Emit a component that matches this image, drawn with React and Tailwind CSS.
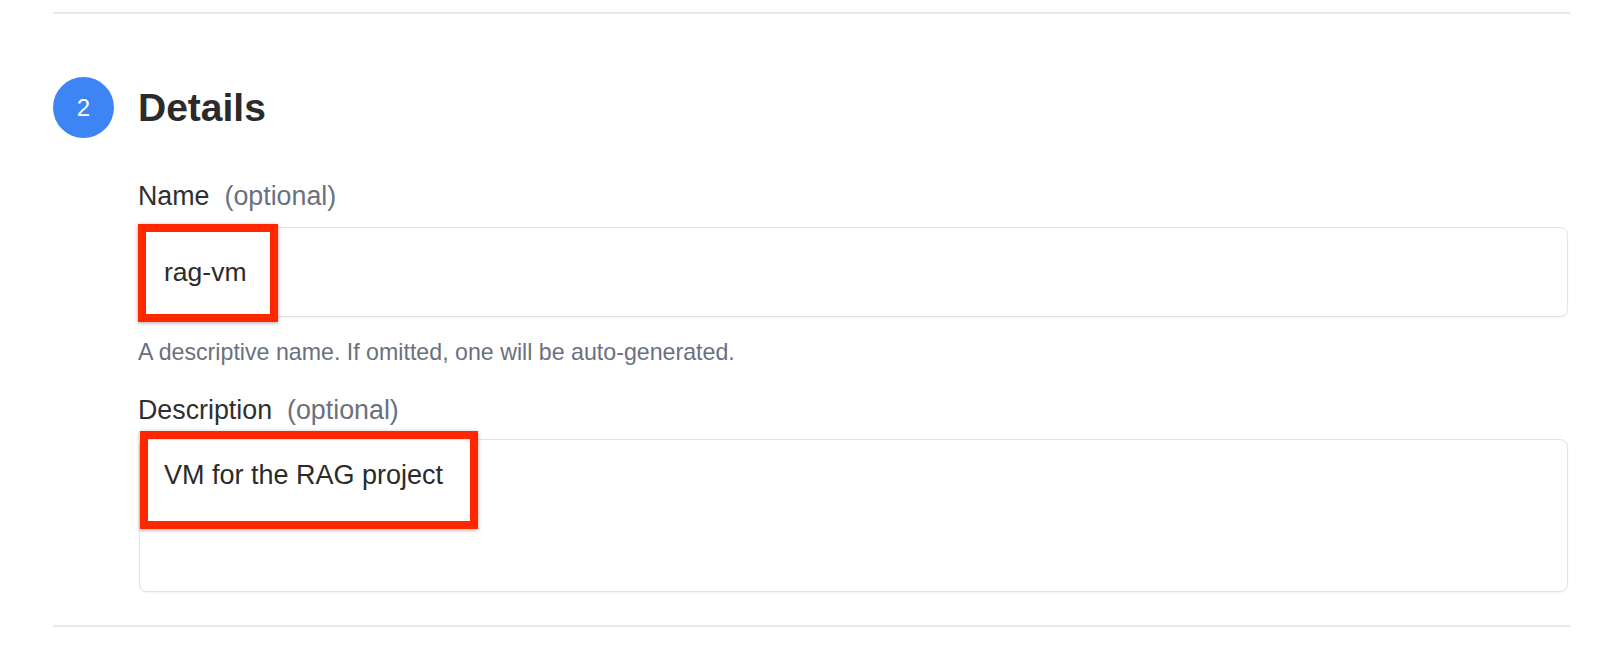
import React from "react";

function Highlight({ className }) {
  return (
    <div
      className={`pointer-events-none absolute border-[8px] border-[#ff2600] shadow-[0_1px_4px_rgba(0,0,0,0.35)] ${className}`}
    />
  );
}

function Label({ name }) {
  return (
    <div className="h-[30px] leading-[30px] text-[26.8px] text-[#2f2f2f]">
      {name}
      <span className="ml-[15px] text-[#6b7080]">(optional)</span>
    </div>
  );
}

export default function App() {
  return (
    <div className="min-h-screen bg-white pl-[53px] pr-[30px] pt-[12px] font-['Liberation_Sans',Arial,sans-serif]">
      <section className="border-t-2 border-b-2 border-[#e8e8ea] pt-[63px] pb-[33px]">
        <div className="flex items-center gap-[24px]">
          <div className="flex h-[61px] w-[61px] items-center justify-center rounded-full bg-[#3d85f5] text-[24px] text-white">
            2
          </div>
          <h2 className="text-[39px] font-bold leading-none text-[#2b2b2b]">
            Details
          </h2>
        </div>

        <div className="ml-[85px] mr-[2px]">
          <div className="mt-[43px]">
            <Label name="Name" />
          </div>
          <div className="relative mt-[16px] ml-[1px]">
            <input
              defaultValue="rag-vm"
              className="h-[90px] w-full rounded-[8px] border border-[#e2e3e8] bg-white px-[24px] text-[26.5px] text-[#2b2b2b] shadow-[0_1px_2px_rgba(0,0,0,0.05)] outline-none"
            />
            <Highlight className="left-[-1px] top-[-3px] h-[98px] w-[140px]" />
          </div>
          <p className="mt-[20px] h-[30px] leading-[30px] text-[23.2px] text-[#6b7080]">
            A descriptive name. If omitted, one will be auto-generated.
          </p>

          <div className="mt-[28px]">
            <Label name="Description" />
          </div>
          <div className="relative mt-[14px] ml-[1px]">
            <textarea
              defaultValue="VM for the RAG project"
              className="block h-[153px] w-full resize-none rounded-[8px] border border-[#e2e3e8] bg-white px-[24px] pt-[20px] leading-[30px] text-[27px] text-[#2b2b2b] shadow-[0_1px_2px_rgba(0,0,0,0.05)] outline-none"
            />
            <Highlight className="left-[1px] top-[-8px] h-[98px] w-[338px]" />
          </div>
        </div>
      </section>
    </div>
  );
}
